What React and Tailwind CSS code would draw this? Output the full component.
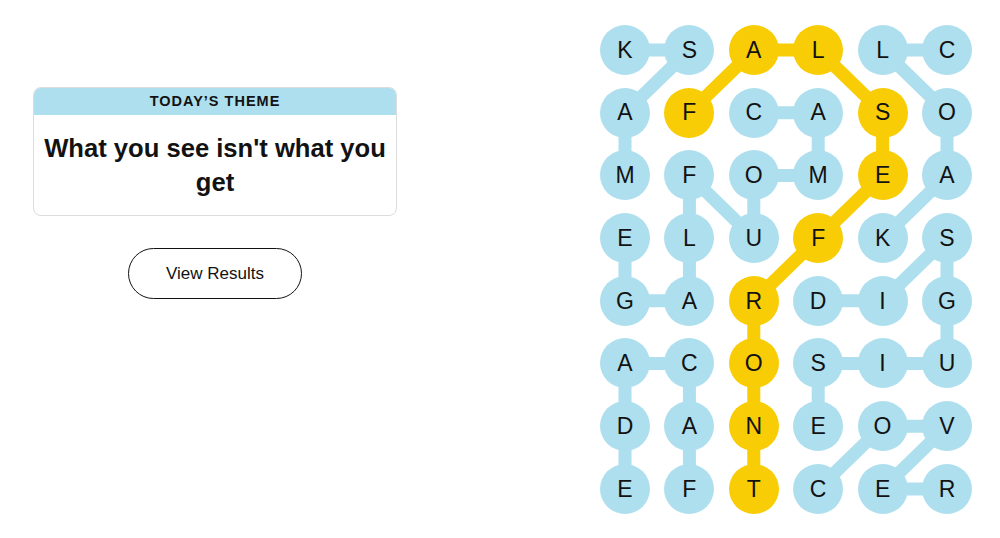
import React from "react";

const ROWS = ["KSALLC", "AFCASO", "MFOMEA", "ELUFKS", "GARDIG", "ACOSIU", "DANEOV", "EFTCER"];

const SPANGRAM = [
	[1, 1], [0, 2], [0, 3], [1, 4], [2, 4], [3, 3], [4, 2], [5, 2], [6, 2], [7, 2],
];

// each found word as a chain of [row, col]
const WORDS = [
	[[0, 0], [0, 1], [1, 0], [2, 0]],
	[[0, 5], [0, 4], [1, 5], [2, 5], [3, 4]],
	[[1, 2], [1, 3], [2, 3], [2, 2], [3, 2], [2, 1], [3, 1], [4, 1], [4, 0], [3, 0]],
	[[4, 3], [4, 4], [3, 5], [4, 5], [5, 5], [5, 4], [5, 3], [6, 3]],
	[[7, 1], [6, 1], [5, 1], [5, 0], [6, 0], [7, 0]],
	[[7, 3], [6, 4], [6, 5], [7, 4], [7, 5]],
];

const COL_STEP = 64.4;
const ROW_STEP = 62.7;
const cx = (c) => 25 + c * COL_STEP;
const cy = (r) => 25 + r * ROW_STEP;

const isSpan = (r, c) => SPANGRAM.some(([a, b]) => a === r && b === c);

const Chain = ({ cells, color }) => (
	<polyline
		points={cells.map(([r, c]) => `${cx(c)},${cy(r)}`).join(" ")}
		fill="none"
		stroke={color}
		strokeWidth="13"
		strokeLinejoin="round"
	/>
);

const Board = () => (
	<div className="relative w-[372px] h-[489px]">
		<svg className="absolute inset-0" width="372" height="489">
			{WORDS.map((w, i) => (
				<Chain key={i} cells={w} color="#aedfee" />
			))}
			<Chain cells={SPANGRAM} color="#f8cd05" />
		</svg>
		<div className="relative grid grid-cols-[repeat(6,50px)] gap-x-[14.4px] gap-y-[12.7px]">
			{ROWS.map((row, r) =>
				row.split("").map((ch, c) => (
					<div
						key={`${r}-${c}`}
						className={`w-[50px] h-[50px] rounded-full flex items-center justify-center text-[23px] text-[#121212] ${
							isSpan(r, c) ? "bg-[#f8cd05]" : "bg-[#aedfee]"
						}`}>
						{ch}
					</div>
				))
			)}
		</div>
	</div>
);

const App = () => {
	return (
		<div
			className="w-[1000px] h-[538px] bg-white flex"
			style={{ fontFamily: "'Liberation Sans', Arial, sans-serif" }}>
			<div className="w-[600px] shrink-0 pl-[33px] pt-[87px] flex flex-col items-start">
				<div className="w-[364px] rounded-[8px] border border-[#dcdcdc] overflow-hidden">
					<div className="h-[27px] bg-[#aedfee] flex items-center justify-center text-[14.5px] font-bold tracking-[1px] text-[#121212]">
						TODAY’S THEME
					</div>
					<div className="h-[100px] flex items-center justify-center px-[4px] text-center text-[25.6px] leading-[34px] font-bold text-[#121212]">
						What you see isn't what you get
					</div>
				</div>
				<div className="w-[364px] flex justify-center mt-[32px]">
					<button className="w-[174px] h-[51px] rounded-full border border-[#121212] text-[17px] text-[#121212] bg-white">
						View Results
					</button>
				</div>
			</div>
			<div className="pt-[25px]">
				<Board />
			</div>
		</div>
	);
};

export default App;
